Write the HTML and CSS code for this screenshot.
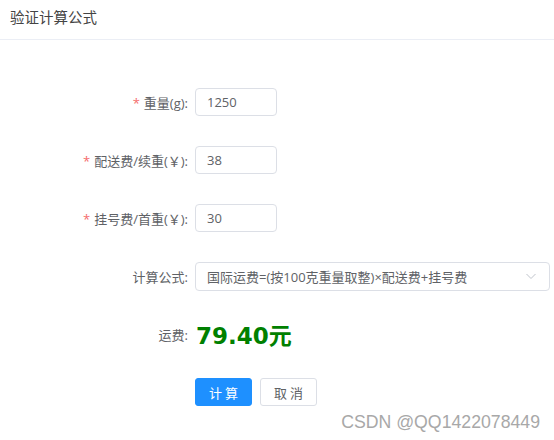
FILE: index.html
```html
<!DOCTYPE html>
<html lang="zh-CN">
  <head>
    <meta charset="UTF-8" />
    <meta name="viewport" content="width=device-width, initial-scale=1.0" />
    <title>验证计算公式</title>
    <link rel="stylesheet" href="styles.css">
  </head>
  <body>
    <div class="dialog">
      <div class="dialog-header">验证计算公式</div>
      <form class="form">
        <div class="form-item">
          <label class="label required">重量(g):</label>
          <input class="input" type="text" value="1250" />
        </div>
        <div class="form-item">
          <label class="label required">配送费/续重(￥):</label>
          <input class="input" type="text" value="38" />
        </div>
        <div class="form-item">
          <label class="label required">挂号费/首重(￥):</label>
          <input class="input" type="text" value="30" />
        </div>
        <div class="form-item">
          <label class="label">计算公式:</label>
          <div class="select">
            <span>国际运费=(按100克重量取整)×配送费+挂号费</span>
            <svg class="arrow" width="12" height="12" viewBox="0 0 12 12">
              <path d="M1.5 4 L6 8.5 L10.5 4" fill="none" stroke="#c0c4cc" stroke-width="1" />
            </svg>
          </div>
        </div>
        <div class="form-item">
          <label class="label">运费:</label>
          <span class="result">79.40元</span>
        </div>
        <div class="form-item">
          <span class="label"></span>
          <div class="actions">
            <button type="button" class="btn btn-primary">计 算</button>
            <button type="button" class="btn">取 消</button>
          </div>
        </div>
      </form>
      <div class="watermark">CSDN @QQ1422078449</div>
    </div>
  </body>
</html>
```

FILE: styles.css
```css
html, body {
  margin: 0;
  background: #fff;
}
body {
  font-family: 'Open Sans', 'Noto Sans CJK SC', sans-serif;
  color: #606266;
  font-size: 13px;
}
.dialog {
  position: relative;
  width: 554px;
  height: 440px;
  overflow: hidden;
}
.dialog-header {
  height: 39px;
  line-height: 35px;
  padding: 0 10px;
  font-size: 14.5px;
  color: #444;
  border-bottom: 1px solid #ebeef5;
}
.form {
  padding: 48px 4px 0 0;
  display: flex;
  flex-direction: column;
  gap: 30px;
}
.form-item {
  display: flex;
  align-items: center;
  height: 28px;
}
.label {
  width: 188px;
  flex-shrink: 0;
  padding-right: 7px;
  text-align: right;
  color: #606266;
  font-size: 13px;
}
.required::before {
  content: '*';
  color: #f56c6c;
  margin-right: 4px;
}
.input {
  box-sizing: border-box;
  width: 82px;
  height: 28px;
  border: 1px solid #dcdfe6;
  border-radius: 4px;
  padding: 0 11px;
  font: inherit;
  color: #606266;
  outline: none;
}
.select {
  box-sizing: border-box;
  flex: 1;
  height: 29px;
  border: 1px solid #dcdfe6;
  border-radius: 4px;
  padding: 0 12px 0 11px;
  display: flex;
  align-items: center;
  justify-content: space-between;
  color: #606266;
}
.result {
  font-family: 'DejaVu Sans', 'Noto Sans CJK SC', sans-serif;
  font-weight: bold;
  font-size: 23px;
  color: #008000;
  margin-left: 1px;
}
.actions {
  display: flex;
  gap: 8px;
}
.btn {
  box-sizing: border-box;
  width: 57px;
  height: 28px;
  border: 1px solid #dcdfe6;
  border-radius: 3px;
  background: #fff;
  color: #606266;
  font-family: 'Noto Sans CJK SC', sans-serif;
  font-size: 13px;
  cursor: pointer;
}
.btn-primary {
  background: #1e90ff;
  border-color: #1e90ff;
  color: #fff;
}
.watermark {
  position: absolute;
  right: 14px;
  bottom: 7px;
  font-family: 'Liberation Sans', sans-serif;
  font-size: 17.7px;
  color: #a8a8a8;
}
```
